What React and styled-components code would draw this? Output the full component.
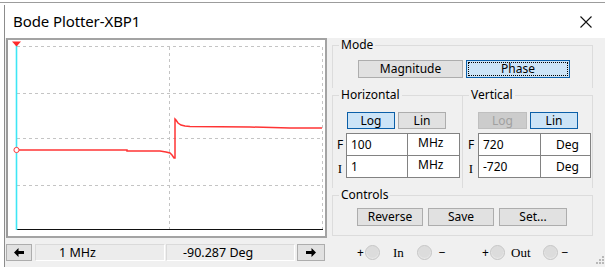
import styled, { createGlobalStyle } from 'styled-components';

const GlobalStyle = createGlobalStyle`
  html, body {
    margin: 0;
    padding: 0;
    background: #ffffff;
  }
  body {
    font-family: "Noto Sans", "Open Sans", sans-serif;
    font-size: 12px;
    color: #000;
  }
`;

// fenetre de fond (juste une ligne grise en haut)
const Desk = styled.div`
  width: 605px;
  height: 267px;
  overflow: hidden;
  padding-top: 2px;
  box-sizing: border-box;
`;

const DeskEdge = styled.div`
  border-top: 1px solid #9c9c9c;
  padding: 2px 0 0 4px;
`;

const Window = styled.div`
  border-left: 1px solid #8c8c8c;
  width: 601px;
  display: flex;
  flex-direction: column;
`;

const TitleBar = styled.div`
  height: 33px;
  background: #ffffff;
  display: flex;
  align-items: center;
  justify-content: space-between;
  padding: 0 14px 0 8px;
`;

const Title = styled.span`
  font-size: 15px;
  letter-spacing: -0.1px;
  padding-bottom: 1px;
`;

const Body = styled.div`
  background: #f0f0f0;
  height: 229px;
  display: flex;
  position: relative;
`;

const LeftCol = styled.div`
  width: 325px;
  padding-left: 1px;
  box-sizing: border-box;
  display: flex;
  flex-direction: column;
`;

const PlotFrame = styled.div`
  width: 321px;
  height: 200px;
  box-sizing: border-box;
  border: 2px solid #a3a3a3;
  border-left-color: #9a9a9a;
  background: #ffffff;
`;

const StatusBar = styled.div`
  margin-top: 6px;
  height: 17px;
  display: flex;
  align-items: stretch;
`;

const ArrowButton = styled.button`
  width: ${(p) => p.$w}px;
  margin: 0 ${(p) => p.$mr || 0}px 0 ${(p) => p.$ml || 0}px;
  padding: 0;
  border: 1px solid #adadad;
  background: #e1e1e1;
  display: flex;
  align-items: center;
  justify-content: center;
`;

const Readout = styled.div`
  width: ${(p) => p.$w}px;
  box-sizing: border-box;
  margin-right: ${(p) => p.$mr || 0}px;
  padding-left: ${(p) => p.$pl}px;
  background: #ececec;
  border: 1px solid #dadada;
  border-right-color: #ffffff;
  border-bottom-color: #ffffff;
  font-size: 12.5px;
  line-height: 15px;
`;

const RightCol = styled.div`
  width: 270px;
  padding-left: 2px;
  display: flex;
  flex-direction: column;
`;

const Group = styled.fieldset`
  margin: 0;
  padding: 0;
  width: ${(p) => p.$w}px;
  box-sizing: border-box;
  border: 1px solid #dcdcdc;
  ${(p) => p.$open && 'border-bottom: none;'}
  ${(p) => p.$noRight && 'border-right: none;'}
`;

const Legend = styled.legend`
  padding: 0 2px;
  margin-left: 6px;
  font-size: 12px;
  line-height: 14px;
`;

const GroupRow = styled.div`
  display: flex;
`;

const ButtonLine = styled.div`
  display: flex;
  gap: ${(p) => p.$gap || 3}px;
  padding: ${(p) => p.$pt}px 0 ${(p) => p.$pb || 0}px ${(p) => p.$pl}px;
`;

const Btn = styled.button`
  width: ${(p) => p.$w}px;
  height: ${(p) => p.$h || 18}px;
  padding: 0;
  font-family: "Noto Sans", "Open Sans", sans-serif;
  font-size: 12px;
  line-height: 14px;
  color: ${(p) => (p.$disabled ? '#a0a0a0' : '#000')};
  background: ${(p) => (p.$active ? '#cce4f7' : p.$disabled ? '#cccccc' : '#e1e1e1')};
  border: 1px solid ${(p) => (p.$active ? '#0b5fa8' : p.$disabled ? '#bfbfbf' : '#adadad')};
  ${(p) => p.$focus && 'outline: 1px dotted #000; outline-offset: -3px;'}
`;

const FieldGrid = styled.div`
  display: grid;
  grid-template-columns: ${(p) => p.$label}px ${(p) => p.$a}px ${(p) => p.$b}px;
  grid-auto-rows: 22px;
  margin-top: 4px;
  padding-bottom: 11px;
`;

const FieldLabel = styled.span`
  display: flex;
  align-items: center;
  justify-content: center;
  font-family: ${(p) => (p.$serif ? '"Liberation Serif", serif' : '"Noto Sans", sans-serif')};
  font-size: ${(p) => (p.$serif ? 13 : 12)}px;
  padding-top: ${(p) => (p.$serif ? 6 : 0)}px;
`;

const Field = styled.div`
  background: #ffffff;
  border: 1px solid #828282;
  margin: 0 0 -1px -1px;
  padding: ${(p) => (p.$top ? '1px' : '3px')} 0 0 ${(p) => p.$pl || 4}px;
  text-align: ${(p) => (p.$center ? 'center' : 'left')};
  font-size: 12px;
  line-height: 15px;
`;

const TerminalRow = styled.div`
  display: flex;
  align-items: center;
  height: 34px;
  padding: 2px 0 0 25px;
  box-sizing: border-box;
`;

const Terminal = styled.div`
  display: flex;
  align-items: center;
  width: ${(p) => p.$w}px;
`;

const Sign = styled.span`
  font-size: 12px;
  width: 8px;
  margin-left: ${(p) => p.$ml || 0}px;
`;

const Jack = styled.span`
  width: 13px;
  height: 13px;
  border-radius: 50%;
  border: 1px solid #c4c4c4;
  background: radial-gradient(circle at 50% 45%, #dcdcdc 0 55%, #e9e9e9 70%);
`;

const PinName = styled.span`
  margin: 0 ${(p) => p.$mr}px 0 ${(p) => p.$ml}px;
  font-family: "Liberation Serif", serif;
  font-size: 13px;
`;

const Grip = styled.svg`
  position: absolute;
  right: 2px;
  bottom: 3px;
`;

function CloseIcon() {
  return (
    <svg width="12" height="12" viewBox="0 0 12 12">
      <path d="M0.5 0.5 L11.5 11.5 M11.5 0.5 L0.5 11.5" stroke="#111" strokeWidth="1.1" />
    </svg>
  );
}

function Arrow({ dir }) {
  const d = dir === 'left'
    ? 'M0 4.5 L4.5 0 L4.5 3 L10 3 L10 6 L4.5 6 L4.5 9 Z'
    : 'M10 4.5 L5.5 0 L5.5 3 L0 3 L0 6 L5.5 6 L5.5 9 Z';
  return (
    <svg width="10" height="9" viewBox="0 0 10 9">
      <path d={d} fill="#000" />
    </svg>
  );
}

const curve = [
  [8, 110], [119, 110], [119, 111], [152, 111], [158, 112], [162, 113],
  [164, 115], [166, 118], [167, 118], [167, 79], [168, 80], [170, 83],
  [173, 85], [177, 86], [182, 86.5], [242, 87], [282, 88], [314, 88],
];

function Plot() {
  const dash = { stroke: '#c4c4c4', strokeWidth: 1, strokeDasharray: '3 3' };
  return (
    <svg width="317" height="196" viewBox="0 0 317 196">
      <line x1="9" y1="6.5" x2="315" y2="6.5" {...dash} />
      <line x1="9" y1="53.5" x2="314" y2="53.5" {...dash} />
      <line x1="9" y1="98.5" x2="314" y2="98.5" {...dash} />
      <line x1="9" y1="145.5" x2="314" y2="145.5" {...dash} />
      <line x1="161.5" y1="7" x2="161.5" y2="189" {...dash} />
      <line x1="314.5" y1="7" x2="314.5" y2="189" {...dash} />
      <line x1="8" y1="189.5" x2="315" y2="189.5" stroke="#111" strokeWidth="1" />
      <polyline
        points={curve.map((p) => p.join(',')).join(' ')}
        fill="none"
        stroke="#ff3434"
        strokeWidth="1.5"
      />
      <line x1="8.5" y1="2" x2="8.5" y2="190" stroke="#3ee6f5" strokeWidth="1.6" />
      <circle cx="8.5" cy="110" r="2.6" fill="#fff" stroke="#ff3a3a" strokeWidth="1" />
      <path d="M4 1.5 L13 1.5 L8.5 6.5 Z" fill="#ff2a2a" />
    </svg>
  );
}

export default function App() {
  return (
    <>
      <GlobalStyle />
      <Desk>
        <DeskEdge>
          <Window>
            <TitleBar>
              <Title>Bode Plotter-XBP1</Title>
              <CloseIcon />
            </TitleBar>
            <Body>
              <LeftCol>
                <PlotFrame>
                  <Plot />
                </PlotFrame>
                <StatusBar>
                  <ArrowButton $w={26} $mr={3}>
                    <Arrow dir="left" />
                  </ArrowButton>
                  <Readout $w={130} $mr={1} $pl={23}>1 MHz</Readout>
                  <Readout $w={129} $mr={2} $pl={16}>-90.287 Deg</Readout>
                  <ArrowButton $w={28}>
                    <Arrow dir="right" />
                  </ArrowButton>
                </StatusBar>
              </LeftCol>

              <RightCol>
                <Group $w={261} $open>
                  <Legend>Mode</Legend>
                  <ButtonLine $pt={8} $pb={10} $pl={25}>
                    <Btn $w={105}>Magnitude</Btn>
                    <Btn $w={104} $active $focus>Phase</Btn>
                  </ButtonLine>
                </Group>

                <GroupRow>
                  <Group $w={130} $open $noRight>
                    <Legend>Horizontal</Legend>
                    <ButtonLine $pt={10} $pl={14}>
                      <Btn $w={48} $h={17} $active>Log</Btn>
                      <Btn $w={48} $h={17}>Lin</Btn>
                    </ButtonLine>
                    <FieldGrid $label={14} $a={61} $b={52}>
                      <FieldLabel>F</FieldLabel>
                      <Field>100</Field>
                      <Field $top $pl={10}>MHz</Field>
                      <FieldLabel $serif>I</FieldLabel>
                      <Field>1</Field>
                      <Field $top $pl={10}>MHz</Field>
                    </FieldGrid>
                  </Group>
                  <Group $w={131} $open>
                    <Legend>Vertical</Legend>
                    <ButtonLine $pt={10} $pl={15}>
                      <Btn $w={49} $h={17} $disabled>Log</Btn>
                      <Btn $w={48} $h={17} $active>Lin</Btn>
                    </ButtonLine>
                    <FieldGrid $label={16} $a={62} $b={50}>
                      <FieldLabel>F</FieldLabel>
                      <Field>720</Field>
                      <Field $center>Deg</Field>
                      <FieldLabel $serif>I</FieldLabel>
                      <Field>-720</Field>
                      <Field $center>Deg</Field>
                    </FieldGrid>
                  </Group>
                </GroupRow>

                <Group $w={261}>
                  <Legend>Controls</Legend>
                  <ButtonLine $pt={6} $pb={9} $pl={24} $gap={5}>
                    <Btn $w={66} $h={18}>Reverse</Btn>
                    <Btn $w={66} $h={18}>Save</Btn>
                    <Btn $w={68} $h={18}>Set...</Btn>
                  </ButtonLine>
                </Group>

                <TerminalRow>
                  <Terminal $w={125}>
                    <Sign>+</Sign>
                    <Jack />
                    <PinName $ml={13} $mr={13}>In</PinName>
                    <Jack />
                    <Sign $ml={7}>−</Sign>
                  </Terminal>
                  <Terminal $w={110}>
                    <Sign>+</Sign>
                    <Jack />
                    <PinName $ml={6} $mr={12}>Out</PinName>
                    <Jack />
                    <Sign $ml={4}>−</Sign>
                  </Terminal>
                </TerminalRow>
              </RightCol>

              <Grip width="8" height="8" viewBox="0 0 8 8">
                <g fill="#b8b8b8">
                  <rect x="6" y="0" width="2" height="2" />
                  <rect x="3" y="3" width="2" height="2" />
                  <rect x="6" y="3" width="2" height="2" />
                  <rect x="0" y="6" width="2" height="2" />
                  <rect x="3" y="6" width="2" height="2" />
                  <rect x="6" y="6" width="2" height="2" />
                </g>
              </Grip>
            </Body>
          </Window>
        </DeskEdge>
      </Desk>
    </>
  );
}
